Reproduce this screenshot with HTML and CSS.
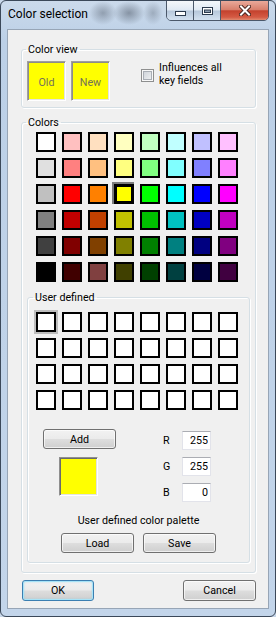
FILE: index.html
```html
<!DOCTYPE html>
<html lang="en">
<head>
    <meta charset="UTF-8">
    <meta name="viewport" content="width=device-width, initial-scale=1.0">
    <title>Color selection</title>
    <link rel="stylesheet" href="styles.css">
</head>
<body>

<div class="window">
    <div class="titlebar">
        <span class="title">Color selection</span>
        <div class="caption-buttons">
            <span class="cap-btn cap-min">
                <svg width="11" height="5" viewBox="0 0 11 5"><rect x="0.5" y="0.5" width="10" height="4" fill="#fff" stroke="#2c3a4d"/></svg>
            </span>
            <span class="cap-btn cap-max">
                <svg width="11" height="8" viewBox="0 0 11 8">
                    <rect x="0.5" y="0.5" width="10" height="7" fill="#fff" stroke="#2c3a4d"/>
                    <rect x="2.5" y="3" width="6" height="2.5" fill="#8d9db0" stroke="#2c3a4d"/>
                </svg>
            </span>
            <span class="cap-btn cap-close">
                <svg width="12" height="11" viewBox="0 0 12 11">
                    <path d="M2 1.5 L10 9.5 M10 1.5 L2 9.5" stroke="#4a2620" stroke-width="4" stroke-linecap="square"/>
                    <path d="M2 1.5 L10 9.5 M10 1.5 L2 9.5" stroke="#fff" stroke-width="2" stroke-linecap="square"/>
                </svg>
            </span>
        </div>
    </div>

    <div class="client">
        <fieldset class="group view-group">
            <legend>Color view</legend>
            <div class="view-row">
                <div class="swatch">Old</div>
                <div class="swatch">New</div>
                <label class="check-label">
                    <span class="check"></span>
                    <span>Influences all<br>key fields</span>
                </label>
            </div>
        </fieldset>

        <fieldset class="group colors-group">
            <legend>Colors</legend>
            <div class="palette base-palette">
                <span class="cell" style="background:#ffffff"></span>
                <span class="cell" style="background:#ffc0c0"></span>
                <span class="cell" style="background:#ffe0c0"></span>
                <span class="cell" style="background:#ffffc0"></span>
                <span class="cell" style="background:#c0ffc0"></span>
                <span class="cell" style="background:#c0ffff"></span>
                <span class="cell" style="background:#c0c0ff"></span>
                <span class="cell" style="background:#ffc0ff"></span>

                <span class="cell" style="background:#e0e0e0"></span>
                <span class="cell" style="background:#ff8080"></span>
                <span class="cell" style="background:#ffc080"></span>
                <span class="cell" style="background:#ffff80"></span>
                <span class="cell" style="background:#80ff80"></span>
                <span class="cell" style="background:#80ffff"></span>
                <span class="cell" style="background:#8080ff"></span>
                <span class="cell" style="background:#ff80ff"></span>

                <span class="cell" style="background:#c0c0c0"></span>
                <span class="cell" style="background:#ff0000"></span>
                <span class="cell" style="background:#ff8000"></span>
                <span class="cell selected" style="background:#ffff00"></span>
                <span class="cell" style="background:#00ff00"></span>
                <span class="cell" style="background:#00ffff"></span>
                <span class="cell" style="background:#0000ff"></span>
                <span class="cell" style="background:#ff00ff"></span>

                <span class="cell" style="background:#808080"></span>
                <span class="cell" style="background:#c00000"></span>
                <span class="cell" style="background:#c04000"></span>
                <span class="cell" style="background:#c0c000"></span>
                <span class="cell" style="background:#00c000"></span>
                <span class="cell" style="background:#00c0c0"></span>
                <span class="cell" style="background:#0000c0"></span>
                <span class="cell" style="background:#c000c0"></span>

                <span class="cell" style="background:#404040"></span>
                <span class="cell" style="background:#800000"></span>
                <span class="cell" style="background:#804000"></span>
                <span class="cell" style="background:#808000"></span>
                <span class="cell" style="background:#008000"></span>
                <span class="cell" style="background:#008080"></span>
                <span class="cell" style="background:#000080"></span>
                <span class="cell" style="background:#800080"></span>

                <span class="cell" style="background:#000000"></span>
                <span class="cell" style="background:#400000"></span>
                <span class="cell" style="background:#804040"></span>
                <span class="cell" style="background:#404000"></span>
                <span class="cell" style="background:#004000"></span>
                <span class="cell" style="background:#004040"></span>
                <span class="cell" style="background:#000040"></span>
                <span class="cell" style="background:#400040"></span>
            </div>

            <fieldset class="group user-group">
                <legend>User defined</legend>
                <div class="palette user-palette">
                    <span class="cell current"></span><span class="cell"></span><span class="cell"></span><span class="cell"></span>
                    <span class="cell"></span><span class="cell"></span><span class="cell"></span><span class="cell"></span>
                    <span class="cell"></span><span class="cell"></span><span class="cell"></span><span class="cell"></span>
                    <span class="cell"></span><span class="cell"></span><span class="cell"></span><span class="cell"></span>
                    <span class="cell"></span><span class="cell"></span><span class="cell"></span><span class="cell"></span>
                    <span class="cell"></span><span class="cell"></span><span class="cell"></span><span class="cell"></span>
                    <span class="cell"></span><span class="cell"></span><span class="cell"></span><span class="cell"></span>
                    <span class="cell"></span><span class="cell"></span><span class="cell"></span><span class="cell"></span>
                </div>

                <div class="editor">
                    <div class="editor-left">
                        <button class="btn">Add</button>
                        <div class="preview"></div>
                    </div>
                    <div class="rgb">
                        <div class="rgb-row"><span class="rgb-label">R</span><input class="num" type="text" value="255"></div>
                        <div class="rgb-row"><span class="rgb-label">G</span><input class="num" type="text" value="255"></div>
                        <div class="rgb-row"><span class="rgb-label">B</span><input class="num" type="text" value="0"></div>
                    </div>
                </div>

                <div class="palette-caption">User defined color palette</div>
                <div class="file-buttons">
                    <button class="btn">Load</button>
                    <button class="btn">Save</button>
                </div>
            </fieldset>
        </fieldset>

        <div class="dialog-buttons">
            <button class="btn btn-dialog btn-default">OK</button>
            <button class="btn btn-dialog btn-cancel">Cancel</button>
        </div>
    </div>
</div>

</body>
</html>
```

FILE: styles.css
```css
body {
    margin: 0;
    background: #c9d8ea;
    font-family: Roboto, "Noto Sans", sans-serif;
    font-size: 10.7px;
    line-height: 13px;
    color: #000;
}

/* window frame */
.window {
    width: 276px;
    height: 617px;
    box-sizing: border-box;
    border: 1px solid #3b4859;
    border-radius: 6px;
    background:
        radial-gradient(ellipse 14px 12px at 102px 12px, rgba(80, 90, 105, 0.45), transparent),
        radial-gradient(ellipse 16px 12px at 128px 12px, rgba(70, 80, 95, 0.5), transparent),
        radial-gradient(ellipse 10px 12px at 152px 12px, rgba(80, 90, 105, 0.35), transparent),
        linear-gradient(#cbdaeb, #bcd0e7 40px, #c3d5ea);
    overflow: hidden;
}

.titlebar {
    display: flex;
    justify-content: space-between;
    height: 28px;
}

.title {
    padding: 6px 0 0 7px;
    font-size: 12px;
    line-height: 15px;
}

.caption-buttons {
    display: flex;
    height: 19px;
    margin: -1px 6px 0 0;
    border: 1px solid #4b586a;
    border-radius: 0 0 5px 5px;
    overflow: hidden;
}

.cap-btn {
    display: flex;
    justify-content: center;
    width: 26px;
    background: linear-gradient(rgba(255, 255, 255, 0.8), rgba(240, 245, 250, 0.6) 48%, rgba(175, 192, 212, 0.7) 52%, rgba(215, 228, 242, 0.8));
}

.cap-min {
    align-items: flex-start;
    padding-top: 10px;
    height: 9px;
}

.cap-max {
    align-items: flex-start;
    padding-top: 6px;
    height: 13px;
    border-left: 1px solid #4b586a;
}

.cap-close {
    width: 47px;
    align-items: flex-start;
    padding-top: 4px;
    height: 15px;
    border-left: 1px solid #4b586a;
    background: linear-gradient(#e9a99a, #d8806d 45%, #c4422e 52%, #d45a44 85%, #e08a70);
}

/* client area */
.client {
    margin: 0 6px;
    border: 1px solid #97a5b6;
    background: #f0f0f0;
}

.group {
    margin: 0;
    padding: 0;
    border: 1px solid #d5dfe5;
    border-radius: 3px;
    box-shadow: inset 1px 1px 0 #fff, 1px 1px 0 #fff;
}

.group legend {
    padding: 0 2px;
    margin-left: 4px;
    line-height: 13px;
}

.view-group {
    margin: 13px 12px 0 13px;
}

.view-row {
    display: flex;
    align-items: flex-start;
    padding: 5px 0 6px 5px;
}

.swatch {
    display: flex;
    align-items: center;
    justify-content: center;
    width: 39px;
    height: 40px;
    box-sizing: border-box;
    margin-right: 5px;
    border: 1px solid;
    border-color: #a0a0a0 #fff #fff #a0a0a0;
    box-shadow: inset 1px 1px 0 #8c8c8c, inset -1px -1px 0 #e3e3e3;
    background: #ffff00;
    color: #72725a;
    padding-top: 2px;
}

.check-label {
    display: flex;
    align-items: flex-start;
    margin-left: 26px;
}

.check {
    width: 11px;
    height: 11px;
    margin: 8px 5px 0 0;
    border: 1px solid #8e8f8f;
    background: linear-gradient(135deg, #c9ced5, #f4f5f6);
    box-shadow: inset 0 0 0 1px #f8f8f8, inset 0 0 0 2px #a9aeb5;
}

.colors-group {
    margin: 8px 12px 0 13px;
}

.palette {
    display: grid;
    grid-template-columns: repeat(8, 20px);
    grid-auto-rows: 20px;
    gap: 6px;
}

.base-palette {
    margin: 3px 0 0 14px;
}

.cell {
    box-sizing: border-box;
    border: 2px solid #000;
    background: #fff;
}

.cell.selected {
    border-width: 3px;
    box-shadow: -1px -1px 0 1px #7c7c7c, 1px 1px 0 1px #f4f4f4;
}

.cell.current {
    box-shadow: 0 0 0 2px #bdbdbd;
}

.user-group {
    margin: 9px 5px 9px 5px;
}

.user-group legend {
    margin-left: 5px;
}

.user-palette {
    margin: 8px 0 0 8px;
}

.editor {
    display: flex;
    align-items: flex-start;
    margin: 19px 0 0 15px;
}

.editor-left {
    display: flex;
    flex-direction: column;
    align-items: flex-start;
    width: 73px;
}

.preview {
    width: 39px;
    height: 39px;
    box-sizing: border-box;
    margin: 8px 0 0 16px;
    border: 1px solid;
    border-color: #8f8f8f #fff #fff #8f8f8f;
    box-shadow: inset 1px 1px 0 #6a6a6a, inset -1px -1px 0 #e3e3e3;
    background: #ffff00;
}

.rgb {
    display: flex;
    flex-direction: column;
    gap: 7px;
    margin: 2px 0 0 47px;
}

.rgb-row {
    display: flex;
    align-items: center;
}

.rgb-label {
    width: 19px;
}

.num {
    width: 29px;
    height: 19px;
    box-sizing: border-box;
    margin: 0;
    padding: 0 2px 0 0;
    border: 1px solid #e2e3ea;
    border-top-color: #abadb3;
    font: inherit;
    text-align: right;
    color: #000;
    background: #fff;
}

.palette-caption {
    margin-top: 12px;
    text-align: center;
}

.file-buttons {
    display: flex;
    justify-content: center;
    gap: 9px;
    margin: 6px 0 9px;
}

/* Win7 push button */
.btn {
    width: 73px;
    height: 20px;
    margin: 0;
    padding: 0;
    box-sizing: border-box;
    border: 1px solid #707070;
    border-radius: 3px;
    background: linear-gradient(#f2f2f2, #ebebeb 48%, #dddddd 52%, #cfcfcf);
    box-shadow: inset 0 0 0 1px rgba(255, 255, 255, 0.65);
    font: inherit;
    color: #000;
}

.dialog-buttons {
    display: flex;
    justify-content: space-between;
    padding: 7px 12px 7px 14px;
}

.btn-dialog {
    height: 21px;
}

.btn-default {
    width: 72px;
    border-color: #3c7fb1;
    box-shadow: inset 0 0 0 1px #a7e3f7, inset 0 0 2px 1px rgba(72, 200, 240, 0.35);
}
```
